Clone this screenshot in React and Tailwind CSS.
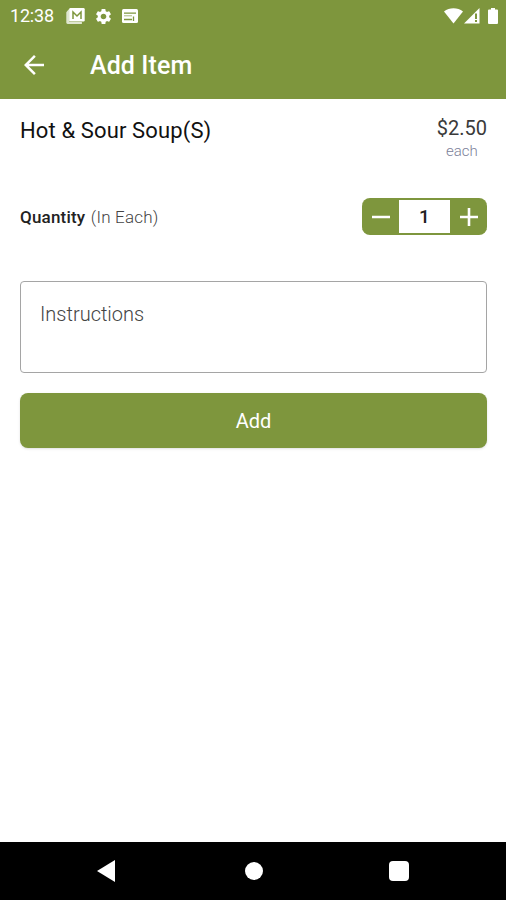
import { useState } from "react";
import { MdArrowBack, MdSettings } from "react-icons/md";

function StatusBar() {
  return (
    <div className="flex h-8 items-center justify-between pl-[10px] pr-[8px]">
      <div className="flex items-center">
        <span className="w-[56px] text-[18px] leading-8 tracking-[-0.2px]">12:38</span>
        <svg width="20" height="18" viewBox="0 0 20 18">
          <path d="M3.5 2.5h-1L.3 5.2v10.3c0 .8.6 1.4 1.4 1.4h14.2v-2H3.5z" fill="#dfe6cf" />
          <rect x="3.2" y="1" width="15.5" height="13.5" rx="1.2" fill="#fff" />
          <path d="M7 12V5l4 4 4-4v7" fill="none" stroke="#7e963d" strokeWidth="1.5" />
        </svg>
        <MdSettings size={19} className="ml-[8px]" />
        <svg width="16" height="14" viewBox="0 0 16 14" className="ml-[9px]">
          <rect width="16" height="14" rx="1.5" fill="#fff" />
          <path d="M2 4.2h12M2 10.5h8M11.5 7.5v4.5" fill="none" stroke="#7e963d" strokeWidth="1.3" />
          <path d="M2 6.8h8" stroke="#a9ba7d" strokeWidth="1" />
        </svg>
      </div>
      <div className="flex items-center">
        <svg width="19" height="16" viewBox="0 0 19 16">
          <path d="M0 3.4C5.4-.8 13.6-.8 19 3.4L9.5 15.5z" fill="#fff" />
        </svg>
        <svg width="16" height="16" viewBox="0 0 16 16" className="ml-px">
          <path d="M15.5 0v15.5H0z" fill="#fff" />
          <path d="M12 5.5v5.5M12 12v2" stroke="#7e963d" strokeWidth="2" />
        </svg>
        <svg width="10" height="16" viewBox="0 0 10 16" className="ml-[8px]">
          <path d="M3 0h4v1.500h2q1 0 1 1V15q0 1-1 1H1q-1 0-1-1V2.500q0-1 1-1h2z" fill="#fff" />
        </svg>
      </div>
    </div>
  );
}

function QuantityStepper() {
  const [qty, setQty] = useState(1);

  return (
    <div className="flex h-[37px] w-[125px] overflow-hidden rounded-lg border-y-2 border-[#7e963d] bg-[#7e963d]">
      <button className="flex w-[37px] items-center justify-center" onClick={() => setQty(Math.max(1, qty - 1))}>
        <svg width="18" height="18" viewBox="0 0 18 18" stroke="#fff" strokeWidth="2.6">
          <path d="M0 9h18" />
        </svg>
      </button>
      <span className="flex w-[51px] items-center justify-center bg-white pt-[2px] text-[19px] font-medium text-[#222]">{qty}</span>
      <button className="flex w-[37px] items-center justify-center" onClick={() => setQty(qty + 1)}>
        <svg width="18" height="18" viewBox="0 0 18 18" stroke="#fff" strokeWidth="2.6">
          <path d="M0 9h18M9 0v18" />
        </svg>
      </button>
    </div>
  );
}

export default function App() {
  return (
    <div className="flex h-[900px] w-[506px] flex-col bg-white font-['Roboto',sans-serif]">
      <header className="h-[99px] bg-[#7e963d] text-white">
        <StatusBar />
        <div className="flex h-[65px] items-center pl-[19px]">
          <MdArrowBack size={30} />
          <h1 className="ml-[41px] pt-[3px] text-[25px] font-medium tracking-[0.1px]">Add Item</h1>
        </div>
      </header>

      <main className="flex flex-1 flex-col pl-5 pr-[19px]">
        <div className="flex justify-between pt-[17px]">
          <h2 className="pt-px text-[22px] leading-7 tracking-[0.13px] text-[#111]">Hot &amp; Sour Soup(S)</h2>
          <div className="text-center">
            <p className="text-[20px] leading-6 text-[#3a3a3a]">$2.50</p>
            <p className="text-[15px] leading-[22px] font-light text-[#7c8199]">each</p>
          </div>
        </div>

        <div className="mt-[36px] flex items-center justify-between">
          <p className="pt-[2px] text-[17px] tracking-[0.2px] text-[#444]">
            <span className="mr-px font-medium text-[#222]">Quantity</span> <span className="font-light">(In Each)</span>
          </p>
          <QuantityStepper />
        </div>

        <textarea
          className="mt-[46px] h-[92px] resize-none rounded border border-[#a5a5a5] px-[19px] py-[18px] text-[20px] leading-7 font-light placeholder:text-[#444] outline-none"
          placeholder="Instructions"
        />
        <button className="mt-5 h-[55px] rounded-lg bg-[#7e963d] text-[20px] text-white shadow-sm">Add</button>
      </main>

      <nav className="flex h-[58px] items-center bg-black pl-[97px]">
        <svg width="18" height="22" viewBox="0 0 18 22" fill="#fff">
          <path d="M0 11 18 0v22z" />
        </svg>
        <div className="ml-[130px] size-[18px] rounded-full bg-white" />
        <div className="ml-[126px] size-5 rounded-sm bg-white" />
      </nav>
    </div>
  );
}
